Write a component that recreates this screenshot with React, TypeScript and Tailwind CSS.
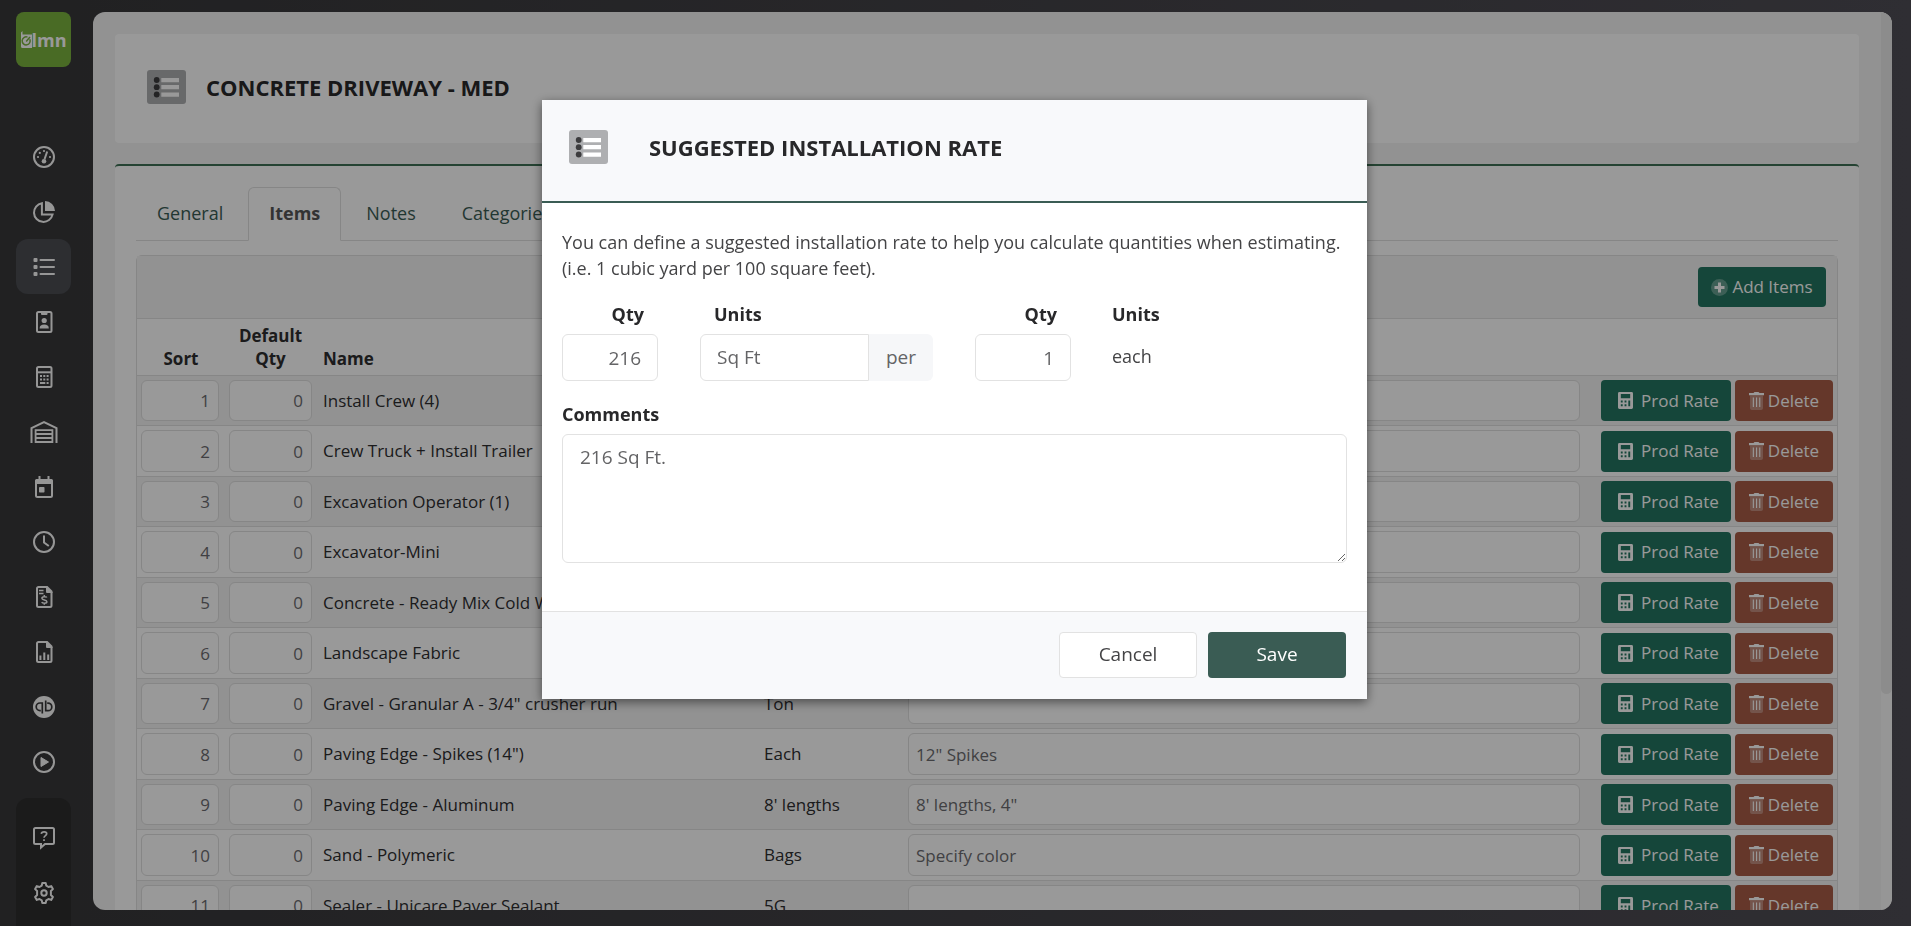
import React, { useState } from 'react';

interface Item {
    sort: number;
    name: string;
    units: string;
    notes: string;
}

const initialItems: Item[] = [
    { sort: 1, name: 'Install Crew (4)', units: 'Hr', notes: '' },
    { sort: 2, name: 'Crew Truck + Install Trailer', units: 'Hr', notes: '' },
    { sort: 3, name: 'Excavation Operator (1)', units: 'Hr', notes: '' },
    { sort: 4, name: 'Excavator-Mini', units: 'Hr', notes: '' },
    { sort: 5, name: 'Concrete - Ready Mix Cold Weather', units: 'Yard', notes: '' },
    { sort: 6, name: 'Landscape Fabric', units: 'Sq Ft', notes: '' },
    { sort: 7, name: 'Gravel - Granular A - 3/4" crusher run', units: 'Ton', notes: '' },
    { sort: 8, name: 'Paving Edge - Spikes (14")', units: 'Each', notes: '12" Spikes' },
    { sort: 9, name: 'Paving Edge - Aluminum', units: "8' lengths", notes: '8\' lengths, 4"' },
    { sort: 10, name: 'Sand - Polymeric', units: 'Bags', notes: 'Specify color' },
    { sort: 11, name: 'Sealer - Unicare Paver Sealant', units: '5G', notes: '' },
];

const navIcons: { label: string; icon: React.ReactNode }[] = [
    {
        label: 'Dashboard',
        icon: (
            <>
                <circle cx="11" cy="11" r="10" />
                <path d="M14.2 5.5 11.6 13" />
                <g fill="currentColor" stroke="none">
                    <circle cx="11" cy="15.2" r="2.3" />
                    <circle cx="11" cy="5" r="1.1" />
                    <circle cx="6.8" cy="6.9" r="1.1" />
                    <circle cx="5" cy="11" r="1.1" />
                    <circle cx="17" cy="11" r="1.1" />
                </g>
            </>
        ),
    },
    {
        label: 'Analytics',
        icon: (
            <>
                <path d="M8.9 2.2A9.4 9.4 0 1 0 19.6 13.4H8.9z" />
                <path d="M12 0a10 10 0 0 1 10 10H12z" fill="currentColor" stroke="none" />
            </>
        ),
    },
    {
        label: 'Items',
        icon: (
            <>
                <path d="M7.5 4H21M7.5 11H21M7.5 18H21" strokeLinecap="round" />
                <g fill="currentColor" stroke="none">
                    <rect x="0.5" y="2" width="4" height="4" rx="1" />
                    <rect x="0.5" y="9" width="4" height="4" rx="1" />
                    <rect x="0.5" y="16" width="4" height="4" rx="1" />
                </g>
            </>
        ),
    },
    {
        label: 'Contacts',
        icon: (
            <>
                <rect x="4" y="1" width="14.5" height="20" rx="1.5" />
                <g fill="currentColor" stroke="none">
                    <path d="M8 1h6.5v2a1 1 0 0 1-1 1H9a1 1 0 0 1-1-1z" />
                    <circle cx="11.2" cy="9.5" r="2.6" />
                    <path d="M6.6 17.5c0-3 1.8-4 4.6-4s4.6 1 4.6 4z" />
                </g>
            </>
        ),
    },
    {
        label: 'Estimates',
        icon: (
            <>
                <rect x="4" y="1" width="14.5" height="20" rx="1.5" />
                <path d="M4 6.3h14.5" />
                <g fill="currentColor" stroke="none">
                    <path d="M7 9h2v2H7zM10.3 9h2v2h-2zM13.6 9h2v2h-2zM7 12.4h2v2H7zM10.3 12.4h2v2h-2zM13.6 12.4h2v2h-2zM7 16h5.3v2H7zM13.6 16h2v2h-2z" />
                </g>
            </>
        ),
    },
    {
        label: 'Warehouse',
        icon: (
            <>
                <path d="M-1.5 22V7.2L11 1.2l12.5 6V22" />
                <path d="M2.6 22V9.2h16.8V22M2.6 13h16.8M2.6 17h16.8M2.6 21h16.8" strokeWidth="1.8" />
            </>
        ),
    },
    {
        label: 'Schedule',
        icon: (
            <>
                <rect x="3" y="4" width="16" height="17" rx="1.5" />
                <g fill="currentColor" stroke="none">
                    <path d="M5.5 0h2v3h-2zM14.5 0h2v3h-2zM2 5a2 2 0 0 1 2-2h14a2 2 0 0 1 2 2v3H2z" />
                    <rect x="6" y="11" width="5.5" height="5.5" rx="0.8" />
                </g>
            </>
        ),
    },
    {
        label: 'Timesheets',
        icon: (
            <>
                <circle cx="11" cy="11" r="10" />
                <path d="M11 4.5V11.5l4.8 3.5" />
            </>
        ),
    },
    {
        label: 'Invoices',
        icon: (
            <>
                <path d="M14 1H5.5A1.5 1.5 0 0 0 4 2.5v17A1.5 1.5 0 0 0 5.5 21h11.5a1.5 1.5 0 0 0 1.5-1.5V6" />
                <path d="M13 0h1.5l5 5v2H14a1 1 0 0 1-1-1z" fill="currentColor" stroke="none" />
                <path d="M6 4.5h4.5M6 7.5h4.5" strokeWidth="1.4" />
                <path d="M13.8 11.5c-.5-1-4.9-1.3-4.9.8 0 2.2 5 1.2 5 3.4 0 2-4.5 1.8-5.2.5M11.3 9v1.5M11.3 17.2v1.5" strokeWidth="1.5" />
            </>
        ),
    },
    {
        label: 'Reports',
        icon: (
            <>
                <path d="M14 1H5.5A1.5 1.5 0 0 0 4 2.5v17A1.5 1.5 0 0 0 5.5 21h11.5a1.5 1.5 0 0 0 1.5-1.5V6" />
                <path d="M13 0h1.5l5 5v2H14a1 1 0 0 1-1-1z" fill="currentColor" stroke="none" />
                <path d="M7.4 19v-4.5M11.3 19v-7.5M15.2 19v-5.5" />
            </>
        ),
    },
    {
        label: 'QuickBooks',
        icon: (
            <>
                <circle cx="11" cy="11" r="11" fill="currentColor" stroke="none" />
                <g className="stroke-[#373739]" strokeWidth="1.7">
                    <path d="M9.3 17.5V7H7a3.8 3.8 0 0 0 0 7.6h.8" />
                    <path d="M12.7 4.5v10.2H15a3.8 3.8 0 0 0 0-7.6h-.8" />
                </g>
            </>
        ),
    },
    {
        label: 'Training',
        icon: (
            <>
                <circle cx="11" cy="11" r="10" />
                <path d="M8 6.5v9l7.5-4.5z" fill="currentColor" strokeWidth="1" strokeLinejoin="round" />
            </>
        ),
    },
];

const NavIcon: React.FC<{ children: React.ReactNode }> = ({ children }) => (
    <svg width="22" height="22" viewBox="0 0 22 22" fill="none" stroke="currentColor" strokeWidth="2" className="overflow-visible">
        {children}
    </svg>
);

const Logo: React.FC = () => (
    <div className="flex h-[55px] w-[55px] shrink-0 items-center justify-center rounded-lg bg-[#7bb23f] text-white">
        <svg width="11" height="17" viewBox="0 0 11 17">
            <path d="M0 1.5 1.5 0v3.5H11V17H1.5A1.5 1.5 0 0 1 0 15.5z" fill="currentColor" />
            <path d="M8.8 8.2A4 4 0 1 1 6.5 6.1M5.2 10.5 9 6" fill="none" stroke="#7bb23f" strokeWidth="1.5" />
        </svg>
        <span className="font-['Open_Sans',sans-serif] text-lg leading-5 font-bold">lmn</span>
    </div>
);

const ListBadge: React.FC = () => (
    <svg width="39" height="34" viewBox="0 0 39 34" className="shrink-0">
        <rect width="39" height="34" rx="3" fill="#aeafb1" />
        <g fill="#3c3c3e">
            <circle cx="9.7" cy="10" r="2.9" />
            <circle cx="9.7" cy="17.2" r="2.9" />
            <circle cx="9.7" cy="24.5" r="2.9" />
        </g>
        <path d="M14.3 8h17.7v4.3H14.3zM14.3 15h17.7v4.3H14.3zM14.3 22.4h17.7v4.3H14.3z" fill="#fff" />
    </svg>
);

const CalculatorIcon: React.FC = () => (
    <svg width="15" height="17" viewBox="0 0 16 18" fill="currentColor">
        <path
            fillRule="evenodd"
            d="M1.5 0h13A1.5 1.5 0 0 1 16 1.5v15a1.5 1.5 0 0 1-1.5 1.5h-13A1.5 1.5 0 0 1 0 16.5v-15A1.5 1.5 0 0 1 1.5 0zM3 2v4.5h10V2zM3 9v2h2V9zM7 9v2h2V9zM3 13v2h2v-2zM7 13v2h2v-2zM11 9v6h2V9z"
        />
    </svg>
);

const TrashIcon: React.FC = () => (
    <svg width="15" height="18" viewBox="0 0 15 18" fill="currentColor">
        <path d="M1 3.5h13V16a2 2 0 0 1-2 2H3a2 2 0 0 1-2-2z" opacity="0.3" />
        <path d="M0 1h4.5L5.5 0h4l1 1H15v2.2H0z" />
        <path d="M3.8 5.5h1.1v9.500H3.8zM7 5.5h1.1v9.500H7zM10.2 5.5h1.1v9.500h-1.1z" />
    </svg>
);

const PlusIcon: React.FC = () => (
    <svg width="17" height="17" viewBox="0 0 17 17" fill="currentColor">
        <circle cx="8.5" cy="8.5" r="8.5" opacity="0.3" />
        <path d="M7 3.5h3V7h3.5v3H10v3.5H7V10H3.5V7H7z" />
    </svg>
);

const Sidebar: React.FC = () => (
    <aside className="flex w-[93px] shrink-0 flex-col items-center overflow-hidden pt-3 pr-[6px] text-[#fbfbfb]">
        <Logo />
        <nav className="mt-[62px] flex flex-col">
            {navIcons.map((item) => (
                <a
                    key={item.label}
                    href="#"
                    aria-label={item.label}
                    className={`flex h-[55px] w-[55px] items-center justify-center rounded-xl ${item.label === 'Items' ? 'bg-[#4b4d53]' : ''}`}
                >
                    <NavIcon>{item.icon}</NavIcon>
                </a>
            ))}
        </nav>
        <div className="mt-auto flex shrink-0 flex-col rounded-t-xl bg-[#2e2e2e] pt-3 pb-[6px]">
            <a href="#" aria-label="Help" className="flex h-[55px] w-[55px] items-center justify-center">
                <NavIcon>
                    <path d="M2.5 1h17A1.5 1.5 0 0 1 21 2.5v13a1.5 1.5 0 0 1-1.5 1.5H12l-4 3.5V17H2.5A1.5 1.5 0 0 1 1 15.5v-13A1.5 1.5 0 0 1 2.5 1z" />
                    <path d="M8.3 6.8c.3-2.7 5.4-2.7 5.4 0 0 1.8-2.7 1.8-2.7 4M11 12.3v1.8" strokeWidth="1.7" />
                </NavIcon>
            </a>
            <a href="#" aria-label="Settings" className="flex h-[55px] w-[55px] items-center justify-center">
                <NavIcon>
                    <path
                        d="M8.7 3.7 9.3 1h3.4l.6 2.7 2.2 1.3 2.7-.9 1.7 3-2 1.9v4l2 1.9-1.7 3-2.7-.9-2.2 1.3-.6 2.7H9.3l-.6-2.7L6.5 17l-2.7.9-1.7-3 2-1.9V9L2.1 7.1l1.7-3 2.7.9z"
                        strokeLinejoin="round"
                    />
                    <circle cx="11" cy="11" r="2.7" />
                </NavIcon>
            </a>
        </div>
    </aside>
);

const ItemsTable: React.FC<{ items: Item[] }> = ({ items }) => (
    <div className="mt-[14px] rounded-t-md border border-[#dfdfdf]">
        <div className="flex h-[63px] items-center justify-end border-b border-[#dfdfdf] bg-[#f4f4f4] pr-[11px]">
            <button className="flex h-10 w-32 items-center justify-center gap-1 rounded bg-[#237661] text-[17px] text-white">
                <PlusIcon />
                Add Items
            </button>
        </div>
        <table className="w-full table-fixed border-separate border-spacing-0 text-[#2e2e30]">
            <colgroup>
                <col className="w-[88px]" />
                <col className="w-[91px]" />
                <col className="w-[441px]" />
                <col className="w-[147px]" />
                <col />
                <col className="w-[240px]" />
            </colgroup>
            <thead>
                <tr className="h-[57px] align-bottom text-[17px] leading-[23px] *:border-b *:border-[#dfdfdf] *:pb-[5px]">
                    <th className="font-bold">Sort</th>
                    <th className="font-bold">Default Qty</th>
                    <th className="pl-[7px] text-left font-bold">Name</th>
                    <th></th>
                    <th></th>
                    <th></th>
                </tr>
            </thead>
            <tbody>
                {items.map((item) => (
                    <tr
                        key={item.sort}
                        className="group h-[50px] text-[17px] odd:bg-[#f4f4f4] even:h-[51px] *:border-b *:border-[#dfdfdf] *:p-0"
                    >
                        <td>
                            <input
                                aria-label="Sort"
                                defaultValue={item.sort}
                                className="ml-1 block h-[41px] w-[78px] rounded-md border border-[#dfdfdf] bg-white pr-2 text-right text-[#6c6c70] group-even:h-[42px]"
                            />
                        </td>
                        <td>
                            <input
                                aria-label="Default Qty"
                                defaultValue="0"
                                className="ml-1 block h-[41px] w-[83px] rounded-md border border-[#dfdfdf] bg-white pr-2 text-right text-[#6c6c70] group-even:h-[42px]"
                            />
                        </td>
                        <td>
                            <span className="pl-[7px]">{item.name}</span>
                        </td>
                        <td>
                            <span className="pl-[7px]">{item.units}</span>
                        </td>
                        <td>
                            <div className="pr-[17px] pl-1">
                                <input
                                    aria-label="Notes"
                                    defaultValue={item.notes}
                                    className="block h-[41px] w-full rounded-md border border-[#dfdfdf] bg-white px-[7px] text-[#6c6c70] group-even:h-[42px]"
                                />
                            </div>
                        </td>
                        <td>
                            <div className="flex gap-1 pl-1 text-white">
                                <button className="flex h-[41px] w-[130px] items-center gap-2 rounded bg-[#237661] pl-[17px]">
                                    <CalculatorIcon />
                                    Prod Rate
                                </button>
                                <button className="flex h-[41px] w-[98px] items-center justify-center gap-1 rounded bg-[#a85c46]">
                                    <TrashIcon />
                                    Delete
                                </button>
                            </div>
                        </td>
                    </tr>
                ))}
            </tbody>
        </table>
    </div>
);

const tabs = ['General', 'Items', 'Notes', 'Categories'];

const RateDialog: React.FC = () => {
    const [qty, setQty] = useState('216');
    const [units, setUnits] = useState('Sq Ft');
    const [perQty, setPerQty] = useState('1');
    const [comments, setComments] = useState('216 Sq Ft.');

    return (
        <div className="fixed inset-0 z-10 flex items-start justify-center bg-black/40 pt-[100px] pr-[2px]">
            <div
                role="dialog"
                aria-labelledby="rate-title"
                className="w-[825px] max-w-full bg-white text-lg text-[#444446] shadow-[0_3px_10px_rgba(0,0,0,0.5)]"
            >
                <header className="flex h-[103px] items-center border-b-2 border-[#3a5c54] bg-[#f8f9fb] pr-6 pb-[7px] pl-[27px]">
                    <ListBadge />
                    <h2 id="rate-title" className="ml-[41px] text-[22px] font-bold text-[#28282a]">
                        SUGGESTED INSTALLATION RATE
                    </h2>
                </header>
                <div className="px-5 pt-[26px] pb-12">
                    <p className="leading-[26px]">
                        You can define a suggested installation rate to help you calculate quantities when estimating.
                        <br />
                        (i.e. 1 cubic yard per 100 square feet).
                    </p>
                    <div className="mt-5 flex items-start">
                        <div className="w-24">
                            <label htmlFor="qty" className="block pr-[14px] text-right leading-[26px] font-bold text-[#28282a]">
                                Qty
                            </label>
                            <input
                                id="qty"
                                value={qty}
                                onChange={(e) => setQty(e.target.value)}
                                className="mt-[7px] block h-[47px] w-full rounded-md border border-[#e2e2e2] pr-4 text-right text-[19px] text-[#646466]"
                            />
                        </div>
                        <div className="ml-[42px] w-[233px]">
                            <label htmlFor="units" className="block pl-[14px] leading-[26px] font-bold text-[#28282a]">
                                Units
                            </label>
                            <div className="mt-[7px] flex h-[47px]">
                                <input
                                    id="units"
                                    value={units}
                                    onChange={(e) => setUnits(e.target.value)}
                                    className="w-[169px] rounded-l-md border border-[#e2e2e2] pl-4 text-[19px] text-[#646466]"
                                />
                                <span className="flex flex-1 items-center justify-center rounded-r-md bg-[#f6f7f9] text-[19px] text-[#646466]">
                                    per
                                </span>
                            </div>
                        </div>
                        <div className="ml-[42px] w-24">
                            <label htmlFor="per-qty" className="block pr-[14px] text-right leading-[26px] font-bold text-[#28282a]">
                                Qty
                            </label>
                            <input
                                id="per-qty"
                                value={perQty}
                                onChange={(e) => setPerQty(e.target.value)}
                                className="mt-[7px] block h-[47px] w-full rounded-md border border-[#e2e2e2] pr-4 text-right text-[19px] text-[#646466]"
                            />
                        </div>
                        <div className="ml-[41px]">
                            <div className="leading-[26px] font-bold text-[#28282a]">Units</div>
                            <div className="mt-4 leading-[26px]">each</div>
                        </div>
                    </div>
                    <label htmlFor="comments" className="mt-5 block leading-[26px] font-bold text-[#28282a]">
                        Comments
                    </label>
                    <textarea
                        id="comments"
                        value={comments}
                        onChange={(e) => setComments(e.target.value)}
                        className="mt-[7px] block h-[129px] w-full resize rounded-md border border-[#e2e2e2] px-[17px] py-[9px] text-[19px] leading-[26px] text-[#646466]"
                    />
                </div>
                <footer className="flex justify-end gap-[11px] border-t border-[#e2e2e2] bg-[#f8f9fb] px-[21px] pt-5 pb-[21px] text-[19px]">
                    <button className="h-[46px] w-[138px] rounded border border-[#e2e2e2] bg-white">Cancel</button>
                    <button className="h-[46px] w-[138px] rounded bg-[#3a5c54] font-medium text-white">Save</button>
                </footer>
            </div>
        </div>
    );
};

const App: React.FC = () => {
    const [activeTab, setActiveTab] = useState('Items');

    return (
        <div className="flex h-screen overflow-hidden bg-linear-to-r from-[#373739] to-[#4f4d55] font-['Open_Sans',sans-serif]">
            <Sidebar />
            <main className="mt-3 mr-[19px] mb-4 flex min-w-0 flex-1 overflow-hidden rounded-xl bg-[#f3f3f3]">
                <div className="min-w-0 flex-1 overflow-hidden px-[22px] pt-[22px]">
                    <header className="flex h-[109px] items-center gap-5 rounded bg-white px-8 pb-[3px]">
                        <ListBadge />
                        <h1 className="text-[22px] font-bold text-[#28282a]">CONCRETE DRIVEWAY - MED</h1>
                    </header>
                    <section className="mt-[21px] rounded border-t-2 border-[#3e7055] bg-white px-[21px] pt-[21px]">
                        <div className="flex gap-1 border-b border-[#dfdfdf] text-lg">
                            {tabs.map((tab) => (
                                <button
                                    key={tab}
                                    onClick={() => setActiveTab(tab)}
                                    className={`-mb-px h-[54px] rounded-t-md border px-5 pb-[2px] ${
                                        tab === activeTab
                                            ? 'border-[#dfdfdf] border-b-white font-bold text-[#555]'
                                            : 'border-transparent text-[#3a5c54]'
                                    }`}
                                >
                                    {tab}
                                </button>
                            ))}
                        </div>
                        <ItemsTable items={initialItems} />
                    </section>
                </div>
                {/* scroll bar */}
                <div className="w-[11px] shrink-0 bg-[#fbfbfb]">
                    <div className="h-[76%] rounded-b-full bg-[#e9e9e9]" />
                </div>
            </main>
            <RateDialog />
        </div>
    );
};

export default App;
